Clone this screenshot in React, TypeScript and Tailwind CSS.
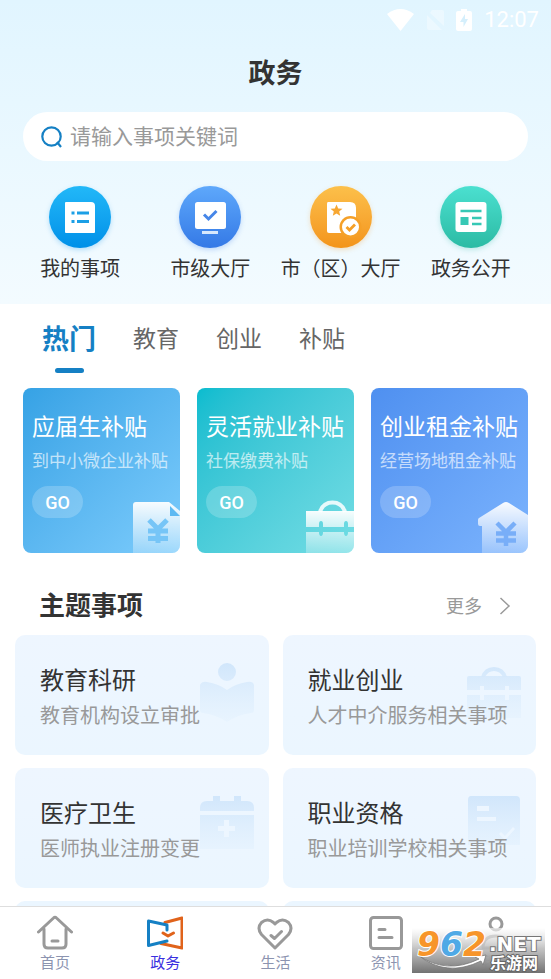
import type { ReactNode } from "react";

const quickLinks = [
  {
    label: "我的事项",
    circle: "bg-linear-to-b from-[#22b8f8] to-[#0090e8] shadow-[0_2px_5px_rgba(0,144,232,0.25)]",
    icon: (
      <>
        <path d="M17 16h25q4 0 4 4v26q0 1-1 1H17q-1 0-1-1V17q0-1 1-1z" fill="#fff" />
        <path d="M22.500 27h3M28 27h12M22.500 35.500h3M28 35.500h12" stroke="#1b9fe6" strokeWidth="3" />
      </>
    ),
  },
  {
    label: "市级大厅",
    circle: "bg-linear-to-b from-[#5ea8fb] to-[#3579e6] shadow-[0_2px_5px_rgba(53,121,230,0.25)]",
    icon: (
      <>
        <rect x="16" y="16" width="31" height="27" rx="2.500" fill="#fff" />
        <rect x="23" y="45" width="16" height="3" fill="#d7e8fd" />
        <path d="M25 28.500l4.500 4.500 8-8" fill="none" stroke="#4686e8" strokeWidth="3" />
      </>
    ),
  },
  {
    label: "市（区）大厅",
    circle: "bg-linear-to-b from-[#fcc04a] to-[#f39419] shadow-[0_2px_5px_rgba(243,148,25,0.25)]",
    icon: (
      <>
        <path d="M18 16h22q6 0 6 6v25H19q-2 0-2-2V18q0-2 1-2z" fill="#fff" />
        <path
          d="M26.500 18.500l1.700 4 4.300.3-3.300 2.800 1 4.200-3.700-2.300-3.700 2.300 1-4.200-3.300-2.800 4.300-.3z"
          fill="#f7a732"
        />
        <circle cx="40.500" cy="41" r="11" fill="#f5a028" />
        <circle cx="40.500" cy="41" r="8.500" fill="#fff" />
        <path d="M36.500 41l3 3 5.500-5.500" fill="none" stroke="#f5a028" strokeWidth="2.800" />
      </>
    ),
  },
  {
    label: "政务公开",
    circle: "bg-linear-to-b from-[#4be0d0] to-[#2bbba4] shadow-[0_2px_5px_rgba(43,187,164,0.25)]",
    icon: (
      <>
        <rect x="15.500" y="16" width="31" height="30" rx="3" fill="#fff" />
        <path d="M20.500 25h21M32 32h9.500M32 38h9.500" stroke="#36c8b5" strokeWidth="2.600" />
        <rect x="20.500" y="31" width="8" height="8" fill="#36c8b5" />
      </>
    ),
  },
];

const tabs = ["热门", "教育", "创业", "补贴"];

const subsidies = [
  {
    title: "应届生补贴",
    desc: "到中小微企业补贴",
    bg: "bg-linear-to-br from-[#35a2e5] to-[#7cccfc]",
    art: (
      <>
        <path d="M3 53V5q0-3 3-3h33l11 9v42z" fill="url(#fade)" />
        <path d="M40 6v10h10z" fill="#5db9f2" />
        <path
          d="M19 20l9 9 9-9M18 31h20M18 38.500h20M28 28v15"
          fill="none"
          stroke="#76c5f7"
          strokeWidth="5"
        />
      </>
    ),
  },
  {
    title: "灵活就业补贴",
    desc: "社保缴费补贴",
    bg: "bg-linear-to-br from-[#06bccf] to-[#71dde4]",
    art: (
      <>
        <path d="M16 12q3-9.500 12.500-9.500T41 12" fill="none" stroke="#e6f9fb" strokeWidth="4" />
        <path
          d="M2 11h48v16h-6v-3q0-3-2-3t-2 3v3H19v-3q0-3-2-3t-2 3v3H2zM2 32h13q0 4 2 4t2-4h21q0 4 2 4t2-4h6v21H2z"
          fill="url(#fade)"
        />
      </>
    ),
  },
  {
    title: "创业租金补贴",
    desc: "经营场地租金补贴",
    bg: "bg-linear-to-br from-[#4f90f0] to-[#7bb3fd]",
    art: (
      <>
        <path
          d="M25 3q3-2 6 0l19 12v38H4V26H2q-2 0-2-2v-4q0-1.500 1-2z"
          fill="url(#fade)"
        />
        <path
          d="M19 23l9 9 9-9M18 33.500h20M18 40.500h20M28 31v15"
          fill="none"
          stroke="#78aef8"
          strokeWidth="4.500"
        />
      </>
    ),
  },
];

const topics = [
  {
    title: "教育科研",
    desc: "教育机构设立审批",
    art: (
      <path d="M28 3a9 9 0 110 18 9 9 0 010-18zM1 25q2-4 7-3 12 2 20 8 8-6 20-8 6-1 7 3v25q0 3-3 3-14 2-24 9-10-7-24-9-3 0-3-3z" />
    ),
  },
  {
    title: "就业创业",
    desc: "人才中介服务相关事项",
    art: (
      <>
        <path d="M15 17q3-10 13-10t13 10h-4q-3-6-9-6t-9 6z" />
        <path d="M3 16h50q2 0 2 2v12H43v-4h-4v4H18v-4h-4v4H1V18q0-2 2-2zM1 35h13v5h4v-5h21v5h4v-5h12v23H1z" />
      </>
    ),
  },
  {
    title: "医疗卫生",
    desc: "医师执业注册变更",
    art: (
      <>
        <path d="M14 3h7v5h14V3h7v5h6q7 0 7 7v3H1v-3q0-7 7-7h6z" />
        <path
          fillRule="evenodd"
          d="M1 22h54v34H1zM25 27v6h-6v5h6v6h5v-6h6v-5h-6v-6z"
        />
      </>
    ),
  },
  {
    title: "职业资格",
    desc: "职业培训学校相关事项",
    art: (
      <path
        fillRule="evenodd"
        d="M5 3h45q4 0 4 4v45H2V7q0-4 3-4zM11 13v5h12v-5zM11 24v4h19v-4zM33 41l6 6 10-11-2-2-8 9-4-4z"
      />
    ),
  },
];

const navItems = [
  {
    label: "首页",
    active: false,
    icon: <path d="M1.500 17L16.500 3q1.500-1.500 3 0l15 14M7 14v15q0 4 4 4h14q4 0 4-4V14M15 26h6" />,
  },
  {
    label: "政务",
    active: true,
    icon: (
      <>
        <path d="M18 7.500L35 3v30L14 28.500" stroke="#e0631b" />
        <path d="M20 15v-5L1.500 6v24.500L20 26" stroke="#1580c4" />
        <path d="M16 18l5 3 5.500-3" stroke="#e0631b" />
      </>
    ),
  },
  {
    label: "生活",
    active: false,
    icon: (
      <path d="M18 33L4.500 19.500q-5-6.500 0-12 6-5 12 0L18 9l1.500-1.500q6-5 12 0 5 5.500 0 12zM14 20.500l3.500 3 7-7" />
    ),
  },
  {
    label: "资讯",
    active: false,
    icon: (
      <>
        <rect x="2.500" y="2.500" width="31" height="31" rx="3" />
        <path d="M11 14.500h6M11 22.500h13" />
      </>
    ),
  },
  {
    label: "我的",
    active: false,
    icon: (
      <>
        <circle cx="18" cy="9" r="6" />
        <path d="M5 33q0-12 13-12t13 12z" />
      </>
    ),
  },
];

function StatusBar() {
  return (
    <div className="flex h-10 items-center justify-end gap-3 pr-3 text-white">
      <svg width="27" height="22" viewBox="0 0 27 22" fill="currentColor">
        <path d="M0 5q13.500-10 27 0L13.500 22z" />
      </svg>
      <svg width="18" height="22" viewBox="0 0 18 22" fill="currentColor" opacity="0.35">
        <path d="M6 1h10q2 0 2 2v14L4 4zM1 6l15 15H3q-2 0-2-2z" />
      </svg>
      <svg width="16" height="22" viewBox="0 0 16 22">
        <path d="M5 0h6v2h3q2 0 2 2v16q0 2-2 2H2q-2 0-2-2V4q0-2 2-2h3z" fill="currentColor" />
        <path d="M9 5l-5 8h3.500v5l4.500-8H9z" fill="#d5effc" />
      </svg>
      <span className="text-[22px] leading-8">12:07</span>
    </div>
  );
}

function TopicArt({ children }: { children: ReactNode }) {
  return (
    <svg className="absolute top-[25px] right-3.5" width="56" height="66" viewBox="0 0 56 66" fill="url(#topic)">
      {children}
    </svg>
  );
}

function Watermark() {
  return (
    <div className="pointer-events-none absolute right-1.5 bottom-1.5">
      <svg width="133" height="45" viewBox="0 0 133 45" className="block">
        <defs>
          <linearGradient id="mark" x1="0" y1="0" x2="0" y2="1">
            <stop offset="0" stopColor="#fff" stopOpacity="0.6" />
            <stop offset="0.450" stopColor="#bdbdbd" stopOpacity="0.9" />
            <stop offset="1" stopColor="#727272" />
          </linearGradient>
        </defs>
        <rect width="133" height="45" fill="url(#mark)" />
        <path d="M6 27q28 20 61 4l-4-2 11-2-3 10-2-4Q34 50 6 27z" fill="#fff" stroke="#777" strokeWidth="0.800" />
        <g fontFamily="DejaVu Sans, sans-serif" fontWeight="700" strokeWidth="2" paintOrder="stroke">
          <text x="5" y="28" fontSize="33" fontStyle="italic" stroke="#fff">
            <tspan fill="#f7952a">9</tspan>
            <tspan fill="#4fa9e6">6</tspan>
            <tspan fill="#f7952a">2</tspan>
          </text>
          <text x="77" y="23" fontSize="20" fill="#fff" stroke="#777">
            .NET
          </text>
        </g>
        <text
          x="78"
          y="41"
          fontSize="16"
          fontWeight="700"
          fontFamily="Noto Sans CJK SC, sans-serif"
          fill="#fff"
          stroke="#666"
          strokeWidth="2"
          paintOrder="stroke"
        >
          乐游网
        </text>
      </svg>
    </div>
  );
}

export default function App() {
  return (
    <div className="flex h-screen flex-col overflow-hidden bg-white font-['Roboto','Noto_Sans_CJK_SC',sans-serif] text-[#333]">
      <svg width="0" height="0" className="absolute">
        <defs>
          <linearGradient id="fade" x1="0" y1="0" x2="0" y2="1">
            <stop offset="0" stopColor="#fff" stopOpacity="0.95" />
            <stop offset="1" stopColor="#fff" stopOpacity="0.25" />
          </linearGradient>
          <linearGradient id="topic" gradientUnits="userSpaceOnUse" x1="0" y1="0" x2="0" y2="66">
            <stop offset="0" stopColor="#cfe5fb" />
            <stop offset="1" stopColor="#e6f3fe" stopOpacity="0.5" />
          </linearGradient>
        </defs>
      </svg>

      <main className="min-h-0 flex-1 overflow-hidden">
        <header className="bg-linear-to-b from-[#e1f5ff] to-[#f3fbff] pb-[21px]">
          <StatusBar />
          <h1 className="mt-3.5 text-center text-[27px] leading-10 font-bold">政务</h1>
          <label className="mx-[23px] mt-[18px] flex h-[49px] items-center gap-2 rounded-full bg-white px-[18px]">
            <svg width="21" height="22" viewBox="0 0 21 22" fill="none" stroke="#1580c4" strokeWidth="2.200">
              <circle cx="10.500" cy="10.500" r="9.200" />
              <path d="M16 16l4 5" />
            </svg>
            <input
              type="search"
              aria-label="搜索事项"
              placeholder="请输入事项关键词"
              className="min-w-0 flex-1 bg-transparent text-[21px] leading-8 outline-none placeholder:text-[#999]"
            />
          </label>
          <div className="mt-[25px] grid grid-cols-4 px-[15px]">
            {quickLinks.map((item) => (
              <a key={item.label} href="#" className="flex flex-col items-center whitespace-nowrap">
                <span className={`size-[62px] rounded-full ${item.circle}`}>
                  <svg width="62" height="62" viewBox="0 0 62 62">
                    {item.icon}
                  </svg>
                </span>
                <span className="mt-[7px] text-[20px] leading-7">{item.label}</span>
              </a>
            ))}
          </div>
        </header>

        <div role="tablist" className="flex items-start gap-[37px] px-[42px] pt-[18px] pb-[15px]">
          {tabs.map((tab, i) => (
            <button key={tab} type="button" role="tab" aria-selected={i === 0} className="flex flex-col items-center">
              <span
                className={
                  i === 0
                    ? "text-[27px] leading-9 font-bold text-[#1580c4]"
                    : "text-[23px] leading-9 text-[#666]"
                }
              >
                {tab}
              </span>
              {i === 0 && <span className="mt-2.5 h-[5px] w-[29px] rounded-full bg-[#1580c4]" />}
            </button>
          ))}
        </div>

        <div className="grid grid-cols-3 gap-[17px] px-[23px]">
          {subsidies.map((item) => (
            <article
              key={item.title}
              className={`relative overflow-hidden rounded-lg pt-6 pb-[35px] pl-[9px] whitespace-nowrap text-white ${item.bg}`}
            >
              <svg className="absolute right-0 bottom-0" width="50" height="53" viewBox="0 0 50 53">
                {item.art}
              </svg>
              <h3 className="text-[23px] leading-8">{item.title}</h3>
              <p className="mt-[5px] text-[17px] leading-6 text-white/65">{item.desc}</p>
              <button
                type="button"
                className="mt-[13px] block h-8 w-[51px] rounded-full bg-white/20 text-[18px] font-medium"
              >
                GO
              </button>
            </article>
          ))}
        </div>

        <section className="pt-[35px]">
          <div className="flex items-center justify-between pr-10 pl-[39px]">
            <h2 className="text-[26px] leading-9 font-bold">主题事项</h2>
            <a href="#" className="flex items-center gap-[17px] text-[18px] text-[#999]">
              更多
              <svg width="12" height="18" viewBox="0 0 12 18" fill="none" stroke="currentColor" strokeWidth="1.500">
                <path d="M1.500 1l8.500 8-8.500 8" />
              </svg>
            </a>
          </div>
          <div className="mt-[11px] grid grid-cols-2 gap-x-3.5 gap-y-[13px] px-[15px]">
            {topics.map((item) => (
              <a
                key={item.title}
                href="#"
                className="relative rounded-[10px] bg-linear-to-b from-[#eef6ff] to-[#ebf6ff] pt-[30px] pb-[25px] pl-[25px] whitespace-nowrap"
              >
                <TopicArt>{item.art}</TopicArt>
                <h3 className="text-[24px] leading-8">{item.title}</h3>
                <p className="relative mt-[5px] text-[20px] leading-7 text-[#999]">{item.desc}</p>
              </a>
            ))}
            <div className="h-[120px] rounded-[10px] bg-[#ebf6ff]" />
            <div className="h-[120px] rounded-[10px] bg-[#ebf6ff]" />
          </div>
        </section>
      </main>

      <nav className="relative grid grid-cols-5 border-t border-[#dedede] bg-white pt-2 pb-1">
        {navItems.map((item) => (
          <a key={item.label} href="#" className="flex flex-col items-center">
            <svg
              width="36"
              height="36"
              viewBox="0 0 36 36"
              fill="none"
              stroke="#999"
              strokeWidth="3"
              strokeLinecap="round"
              strokeLinejoin="round"
            >
              {item.icon}
            </svg>
            <span
              className={
                item.active
                  ? "text-[15px] leading-6 text-[#3a2fe0]"
                  : "text-[15px] leading-6 text-[#8c94b0]"
              }
            >
              {item.label}
            </span>
          </a>
        ))}
        <Watermark />
      </nav>
    </div>
  );
}
